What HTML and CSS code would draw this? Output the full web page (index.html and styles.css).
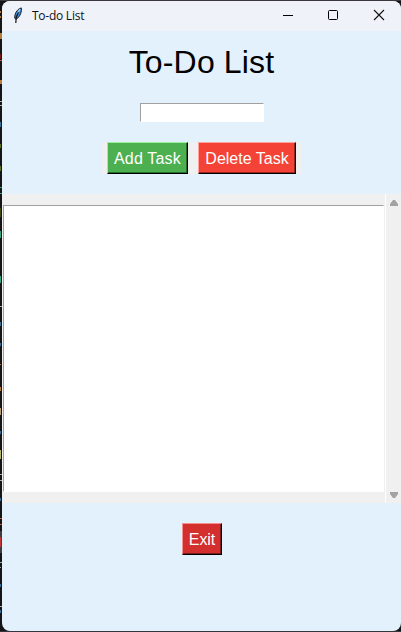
FILE: index.html
```
<!DOCTYPE html>
<html lang="en">
<head>
<meta charset="utf-8">
<title>To-do List</title>
<link rel="stylesheet" href="styles.css">
</head>
<body>
<svg class="backdrop" width="2" height="632" viewBox="0 0 2 632" shape-rendering="crispEdges" aria-hidden="true">
  <path fill="#b97a35" d="M0 11h1v2H0zM0 16h1v2H0zM0 33h2v6H0zM0 80h2v4H0zM0 364h1v1H0zM0 387h1v4H0z"/>
  <path fill="#7c1719" d="M0 54h1v5H0z"/>
  <path fill="#d5533f" d="M0 60h2v1H0zM0 518h2v1H0zM0 524h2v1H0z"/>
  <path fill="#a9a9a9" d="M0 101h2v1H0zM0 105h2v1H0zM0 306h2v1H0zM0 474h2v1H0zM0 480h2v1H0zM0 606h2v1H0z"/>
  <path fill="#386f9f" d="M0 122h1v5H0zM0 322h1v4H0zM0 343h1v3H0zM0 431h1v3H0zM0 498h1v3H0zM0 584h1v3H0zM0 610h1v3H0z"/>
  <path fill="#597124" d="M0 144h1v4H0zM0 166h1v5H0z"/>
  <path fill="#36a478" d="M0 187h2v1H0zM0 193h2v1H0zM0 231h1v7H0zM0 276h1v7H0z"/>
  <path fill="#3f4b14" d="M0 208h1v9H0z"/>
  <path fill="#ba9b72" d="M0 408h1v7H0z"/>
  <path fill="#b6b56a" d="M0 450h1v9H0z"/>
  <path fill="#443b40" d="M0 531h2v22H0z"/>
  <path fill="#bd3a39" d="M0 537h1v10H0z"/>
  <path fill="#99aa98" d="M0 562h2v1H0zM0 567h1v1H0z"/>
</svg>
<div class="window">
  <header class="titlebar">
    <svg class="feather" width="12" height="17" viewBox="0 0 12 17">
      <path d="M9.300.9C6.500 1.300 3.800 4.700 3 7.800L2.700 11l1.100 1.200 2.100-1.300C8.300 8.700 9.900 4.600 9.300.9z" fill="#3f8bdc" stroke="#17212e"/>
      <path d="M8 2.200L5.200 7" stroke="#a9d3f6" stroke-width="1.300"/>
      <path d="M6.500 5.200L4.200 10.200 3.800 16" fill="none" stroke="#111" stroke-width="1.200"/>
    </svg>
    <span class="caption">To-do List</span>
    <svg class="control" width="12" height="12" viewBox="0 0 12 12"><path d="M1 6.500h10" stroke="#000"/></svg>
    <svg class="control" width="12" height="12" viewBox="0 0 12 12"><rect x="1.500" y="1.500" width="9" height="9" rx="1" fill="none" stroke="#000"/></svg>
    <svg class="control close" width="12" height="12" viewBox="0 0 12 12"><path d="M1 1l10 10M11 1L1 11" stroke="#111" stroke-width="1.100"/></svg>
  </header>
  <main class="content">
    <h1 class="heading">To-Do List</h1>
    <input class="entry" type="text" aria-label="Task">
    <div class="actions">
      <button class="button add">Add Task</button>
      <button class="button delete">Delete Task</button>
    </div>
    <div class="list-frame">
      <div class="listbox"></div>
      <div class="scrollbar">
        <svg width="8" height="6" viewBox="0 0 8 6"><path d="M3 0h2l3 4v2H0V4z" fill="#a3a3a3"/></svg>
        <svg width="8" height="6" viewBox="0 0 8 6"><path d="M0 0h8v2L5 6H3L0 2z" fill="#a3a3a3"/></svg>
      </div>
    </div>
    <button class="button exit">Exit</button>
  </main>
</div>
</body>
</html>
```
FILE: styles.css
```
* {
  box-sizing: border-box;
}

body {
  display: flex;
  width: 401px;
  height: 632px;
  margin: 0;
  overflow: hidden;
  background: linear-gradient(#3a383c 0 1px, #151417 1px 631px, #35363c 631px);
  font-family: "Liberation Sans", Arial, sans-serif;
}

.backdrop {
  flex: none;
}

.window {
  display: flex;
  flex-direction: column;
  width: 399px;
  height: 630px;
  margin-top: 1px;
  overflow: hidden;
  border-radius: 8px;
  background: #e3f1fd;
}

.titlebar {
  display: flex;
  flex: none;
  align-items: center;
  height: 30px;
  padding: 0 16px 2px 10px;
  background: #eff3f9;
}

.feather {
  margin-right: 8px;
}

.caption {
  margin-right: auto;
  padding-top: 2px;
  color: #111;
  font: 12px/16px "Open Sans", "Noto Sans", sans-serif;
  letter-spacing: -0.25px;
}

.control + .control {
  margin-left: 33px;
}

.control + .close {
  margin-left: 34px;
}

.content {
  display: flex;
  flex-direction: column;
  align-items: center;
}

.heading {
  margin: 13px 0 0;
  font-size: 32px;
  font-weight: 400;
  line-height: 37px;
  letter-spacing: 0.15px;
  color: #000;
}

.entry {
  width: 124px;
  height: 19px;
  margin-top: 22px;
  padding: 0 2px;
  border: 1px solid #fff;
  border-top-color: #a0a0a0;
  border-left-color: #a0a0a0;
  border-radius: 0;
  outline: 0;
  background: #fff;
}

.actions {
  display: flex;
  gap: 10px;
  margin-top: 20px;
  padding: 0 5px;
  background: #f0f0f0;
}

.button {
  height: 32px;
  padding: 0;
  border: 1px solid #000;
  border-radius: 0;
  color: #fff;
  font: 16px/29px "Liberation Sans", Arial, sans-serif;
}

.add {
  width: 81px;
  border-top-color: #9bf09f;
  border-left-color: #9bf09f;
  background: #4caf50;
  box-shadow: inset -1px -1px #256b29;
  letter-spacing: 0.18px;
}

.delete {
  width: 98px;
  border-top-color: #ffa29b;
  border-left-color: #ffa29b;
  background: #f44336;
  box-shadow: inset -1px -1px #96251e;
}

.list-frame {
  display: flex;
  width: 399px;
  height: 309px;
  margin-top: 20px;
  background: #f0f0f0;
}

.listbox {
  width: 381px;
  height: 287px;
  margin: 11px 1px 0;
  border: 1px solid #fff;
  border-top-color: #a0a0a0;
  border-left-color: #a0a0a0;
  background: #fff;
}

.scrollbar {
  display: flex;
  flex-direction: column;
  align-items: center;
  justify-content: space-between;
  width: 16px;
  padding: 6px 0 5px;
  border-left: 1px solid #fff;
}

.exit {
  width: 40px;
  margin-top: 20px;
  padding-left: 1px;
  border-top-color: #f58f8f;
  border-left-color: #f58f8f;
  background: #d32f2f;
  box-shadow: inset -1px -1px #7d1c1c;
  letter-spacing: -0.1px;
}
```
